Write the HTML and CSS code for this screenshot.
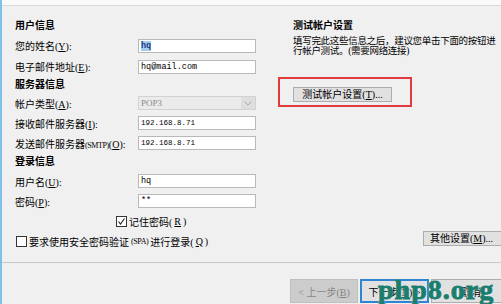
FILE: index.html
```html
<!DOCTYPE html>
<html lang="zh-CN">

<head>
    <meta charset="UTF-8">
    <title>帐户设置</title>
    <link rel="stylesheet" href="styles.css">
</head>

<body>
    <div class="window">
        <div class="titlebar"></div>

        <div class="main">
            <div class="left">
                <div class="head">用户信息</div>
                <div class="field wide">
                    <label>您的姓名(<u>Y</u>):</label>
                    <div class="input"><span class="selected">hq</span></div>
                </div>
                <div class="field wide">
                    <label>电子邮件地址(<u>E</u>):</label>
                    <div class="input">hq@mail.com</div>
                </div>

                <div class="head low">服务器信息</div>
                <div class="field">
                    <label>帐户类型(<u>A</u>):</label>
                    <div class="select">
                        <span class="select-value">POP3</span>
                        <span class="select-arrow">
                            <svg width="8" height="5" viewBox="0 0 8 5"><polyline points="0.5,0.5 4,4 7.5,0.5" fill="none" stroke="#a9a9a9" stroke-width="1"/></svg>
                        </span>
                    </div>
                </div>
                <div class="field">
                    <label>接收邮件服务器(<u>I</u>):</label>
                    <div class="input ip">192.168.8.71</div>
                </div>
                <div class="field">
                    <label>发送邮件服务器<span class="small">(SMTP)</span>(<u>O</u>):</label>
                    <div class="input ip">192.168.8.71</div>
                </div>

                <div class="head">登录信息</div>
                <div class="field">
                    <label>用户名(<u>U</u>):</label>
                    <div class="input">hq</div>
                </div>
                <div class="field">
                    <label>密码(<u>P</u>):</label>
                    <div class="input">**</div>
                </div>

                <div class="check remember">
                    <span class="box">
                        <svg width="9" height="9" viewBox="0 0 9 9"><polyline points="1.5,4.5 3.5,7 7.5,1.5" fill="none" stroke="#222" stroke-width="1.1"/></svg>
                    </span>
                    记住密码(<u>R</u>)
                </div>
                <div class="check spa">
                    <span class="box"></span>
                    要求使用安全密码验证<span class="small">(SPA)</span>进行登录(<u>Q</u>)
                </div>
            </div>

            <div class="right">
                <div class="head">测试帐户设置</div>
                <p class="desc">
                    <span class="line">填写完此这些信息之后，建议您单击下面的按钮进</span>
                    <span class="line">行帐户测试。(需要网络连接)</span>
                </p>
                <div class="highlight">
                    <button class="btn small-btn">测试帐户设置(<u>T</u>)...</button>
                </div>
                <button class="btn small-btn more">其他设置(<u>M</u>)...</button>
            </div>
        </div>

        <div class="footer">
            <button class="btn nav disabled">&lt; 上一步(<u>B</u>)</button>
            <button class="btn nav primary">下一步(<u>N</u>) &gt;</button>
            <button class="btn nav cancel">取消</button>
            <span class="watermark">php8.org</span>
        </div>
    </div>
</body>

</html>
```

FILE: styles.css
```css
* {
    box-sizing: border-box;
    margin: 0;
    padding: 0;
}

body {
    font-family: "Liberation Serif", "Noto Sans CJK SC", serif;
    font-size: 10px;
    color: #000;
    background: #f0f0f0;
    width: 501px;
    height: 304px;
    overflow: hidden;
}

.window {
    height: 304px;
    border-left: 2px solid #7fbfe8;
    display: flex;
    flex-direction: column;
}

.titlebar {
    flex: none;
    height: 6px;
    background: #fafafa;
    border-bottom: 1px solid #d9d9d9;
}

.main {
    flex: none;
    height: 257px;
    display: flex;
    border-bottom: 1px solid #c9c9c9;
}

.left {
    flex: none;
    width: 254px;
    padding: 11px 0 0 13px;
}

.head {
    height: 18px;
    line-height: 18px;
    font-weight: bold;
}

.head.low {
    height: 16px;
    line-height: 16px;
}

.field {
    height: 20px;
    display: flex;
    align-items: center;
}

.field.wide {
    height: 21px;
}

.field label {
    width: 123px;
    white-space: nowrap;
}

.small {
    font-size: 8px;
    letter-spacing: -0.4px;
}

.input {
    width: 118px;
    height: 14px;
    background: #fff;
    border: 1px solid #b9b9b9;
    padding-left: 2px;
    font-family: "Liberation Mono", monospace;
    font-size: 8.5px;
    line-height: 12px;
}

.input.ip {
    font-size: 7.5px;
}

.selected {
    background: #a3cdf0;
    color: #1b3d80;
    font-weight: bold;
}

.select {
    width: 118px;
    height: 14px;
    display: flex;
    background: #ebebeb;
    border: 1px solid #d2d2d2;
}

.select-value {
    flex: 1;
    padding-left: 2px;
    font-size: 9px;
    line-height: 12px;
    color: #8a8a8a;
}

.select-arrow {
    width: 14px;
    display: flex;
    align-items: center;
    justify-content: center;
    background: #dedede;
}

.check {
    height: 20px;
    display: flex;
    align-items: center;
    gap: 2px;
    white-space: nowrap;
}

.check.remember {
    padding-left: 101px;
}

.check.spa {
    padding-left: 1px;
}

.box {
    width: 11px;
    height: 11px;
    display: flex;
    align-items: center;
    justify-content: center;
    background: #fff;
    border: 1px solid #333;
}

.right {
    flex: 1;
    min-width: 0;
    display: flex;
    flex-direction: column;
    align-items: flex-start;
    margin-left: 37px;
    padding: 11px 0 16px;
}

.desc {
    white-space: nowrap;
    font-size: 9.5px;
    letter-spacing: -0.3px;
    line-height: 10px;
    margin-top: 1px;
}

.desc .line {
    display: block;
}

.highlight {
    margin: 21px 0 0 -15px;
    padding: 8px 18px 3px 13px;
    border: 2px solid #e03a3f;
}

.btn {
    font-family: "Liberation Serif", "Noto Sans CJK SC", serif;
    font-size: 10px;
    color: #000;
    background: #e1e1e1;
    border: 1px solid #adadad;
    white-space: nowrap;
}

.small-btn {
    height: 15px;
    line-height: 13px;
    width: 99px;
}

.more {
    margin: auto 0 0 130px;
    width: 95px;
    text-align: left;
    padding-left: 6px;
}

.footer {
    flex: 1;
    position: relative;
    display: flex;
    align-items: flex-start;
    gap: 2px;
    padding: 16px 0 0 288px;
}

.nav {
    flex: none;
    height: 24px;
    width: 68px;
}

.nav.disabled {
    background: #cccccc;
    border-color: #bfbfbf;
    color: #858585;
}

.nav.primary {
    width: 69px;
    border: 2px solid #2f84d4;
}

.nav.cancel {
    width: 80px;
}

.watermark {
    position: absolute;
    left: 376px;
    top: 13px;
    font-family: "Liberation Serif", serif;
    font-size: 28px;
    line-height: 28px;
    font-weight: bold;
    letter-spacing: 1px;
    color: #1b7d6e;
    -webkit-text-stroke: 0.9px #1b7d6e;
    text-shadow: 0 0 2px rgba(255, 255, 255, 0.9);
}
```
